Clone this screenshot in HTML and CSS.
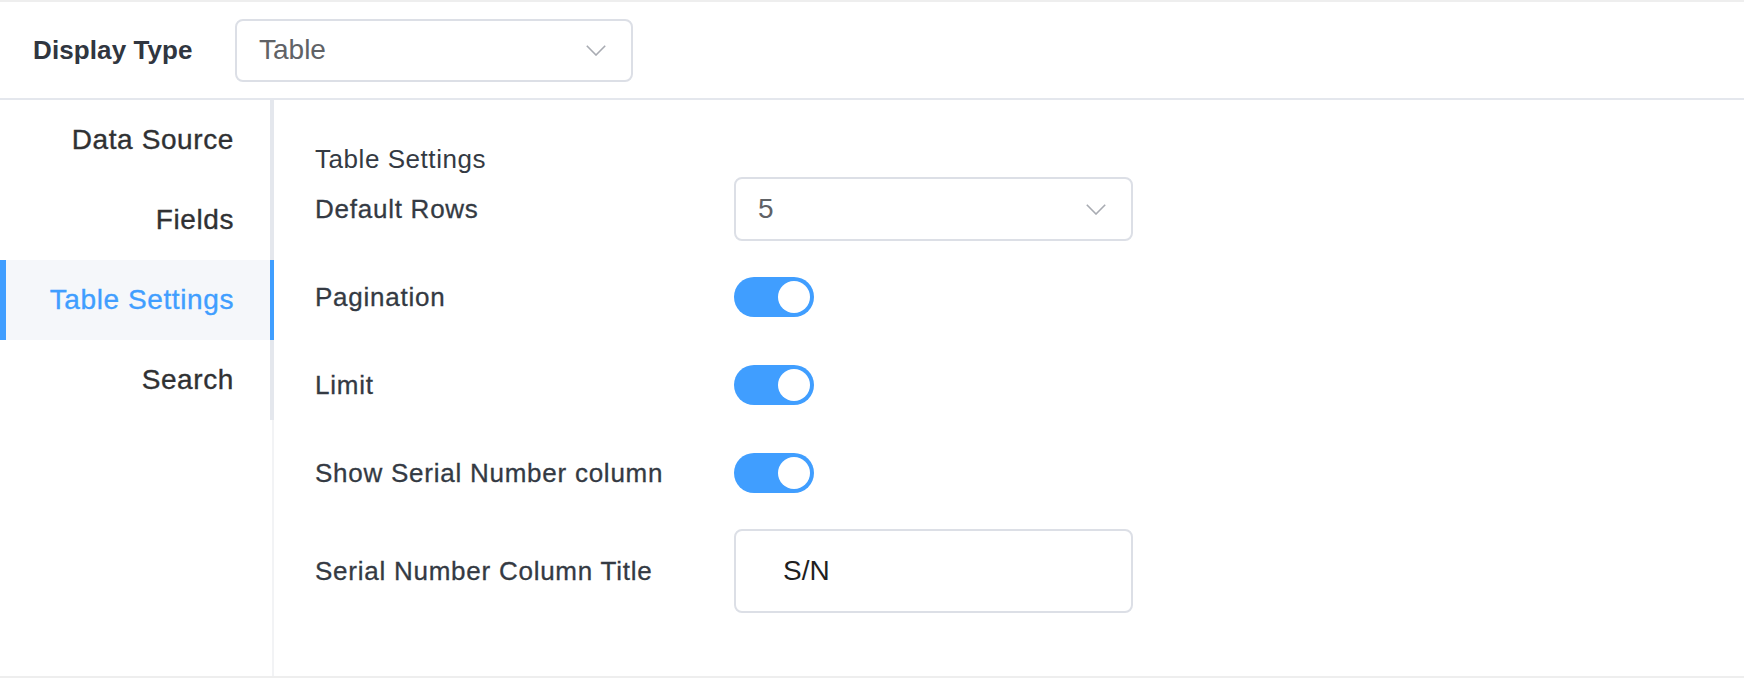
FILE: index.html
```html
<!DOCTYPE html>
<html lang="en">
<head>
<meta charset="utf-8">
<title>Table Settings</title>
<link rel="stylesheet" href="styles.css">
</head>
<body>
<div class="panel">
  <header class="topbar">
    <div class="top-label">Display Type</div>
    <div class="select select-top">
      <span class="select-value">Table</span>
      <svg class="chev" viewBox="0 0 20 11" aria-hidden="true"><polyline points="0.8,0.8 10,10 19.2,0.8" fill="none" stroke="#a8abb2" stroke-width="1.6"/></svg>
    </div>
  </header>
  <div class="main">
    <nav class="sidebar">
      <ul class="tabs">
        <li class="tab">Data Source</li>
        <li class="tab">Fields</li>
        <li class="tab active">Table Settings</li>
        <li class="tab">Search</li>
      </ul>
    </nav>
    <section class="content">
      <div class="section-title">Table Settings</div>
      <div class="form-row">
        <div class="form-label">Default Rows</div>
        <div class="select">
          <span class="select-value">5</span>
          <svg class="chev" viewBox="0 0 20 11" aria-hidden="true"><polyline points="0.8,0.8 10,10 19.2,0.8" fill="none" stroke="#a8abb2" stroke-width="1.6"/></svg>
        </div>
      </div>
      <div class="form-row">
        <div class="form-label">Pagination</div>
        <div class="switch"><span class="knob"></span></div>
      </div>
      <div class="form-row">
        <div class="form-label">Limit</div>
        <div class="switch"><span class="knob"></span></div>
      </div>
      <div class="form-row">
        <div class="form-label">Show Serial Number column</div>
        <div class="switch"><span class="knob"></span></div>
      </div>
      <div class="form-row tall">
        <div class="form-label">Serial Number Column Title</div>
        <div class="text-input">S/N</div>
      </div>
    </section>
  </div>
</div>
</body>
</html>
```
FILE: styles.css
```css
html, body {
  margin: 0;
  padding: 0;
  background: #ffffff;
}

body {
  font-family: "Liberation Sans", Arial, sans-serif;
}

.panel {
  height: 678px;
  box-sizing: border-box;
  border-top: 2px solid #eeeeee;
  border-bottom: 2px solid #eeeeee;
  display: flex;
  flex-direction: column;
}

.topbar {
  height: 98px;
  box-sizing: border-box;
  border-bottom: 2px solid #e4e7ed;
  display: flex;
  align-items: center;
  padding-left: 33px;
  flex: none;
}

.top-label {
  width: 202px;
  font-size: 26px;
  font-weight: 700;
  letter-spacing: 0.1px;
  color: #303640;
}

.select {
  width: 399px;
  height: 64px;
  box-sizing: border-box;
  border: 2px solid #dcdfe6;
  border-radius: 8px;
  display: flex;
  align-items: center;
  justify-content: space-between;
  padding: 0 25px 0 22px;
  font-size: 28px;
  color: #606266;
}

.select-top {
  width: 398px;
  height: 63px;
}

.chev {
  width: 20px;
  height: 11px;
  display: block;
}

.main {
  flex: 1;
  display: flex;
}

.sidebar {
  width: 274px;
  flex: none;
  box-sizing: border-box;
  border-right: 2px solid #f2f3f5;
}

.tabs {
  list-style: none;
  margin: 0 -2px 0 0;
  padding: 0;
  border-right: 4px solid #e4e7ed;
}

.tab {
  height: 80px;
  display: flex;
  align-items: center;
  justify-content: flex-end;
  padding-right: 36px;
  font-size: 28px;
  letter-spacing: 0.6px;
  color: #303133;
  -webkit-text-stroke: 0.35px #303133;
}

.tab.active {
  color: #409eff;
  -webkit-text-stroke: 0.35px #409eff;
  background: #f5f7fa;
  border-left: 6px solid #409eff;
  border-right: 4px solid #409eff;
  margin-right: -4px;
}

.content {
  flex: 1;
  padding: 42px 0 0 41px;
}

.section-title {
  font-size: 26px;
  line-height: 35px;
  letter-spacing: 0.55px;
  color: #343a43;
}

.form-row {
  display: flex;
  align-items: center;
  height: 64px;
  margin-bottom: 24px;
}

.form-row.tall {
  height: 84px;
}

.form-label {
  width: 419px;
  flex: none;
  font-size: 26px;
  letter-spacing: 0.75px;
  color: #343a43;
  -webkit-text-stroke: 0.3px #343a43;
}

.switch {
  width: 80px;
  height: 40px;
  box-sizing: border-box;
  border-radius: 20px;
  background: #409eff;
  display: flex;
  align-items: center;
  justify-content: flex-end;
  padding-right: 4px;
}

.knob {
  width: 32px;
  height: 32px;
  border-radius: 50%;
  background: #ffffff;
}

.text-input {
  width: 399px;
  height: 84px;
  box-sizing: border-box;
  border: 2px solid #dcdfe6;
  border-radius: 8px;
  display: flex;
  align-items: center;
  padding-left: 47px;
  font-size: 28px;
  color: #1f1f1f;
}
```
